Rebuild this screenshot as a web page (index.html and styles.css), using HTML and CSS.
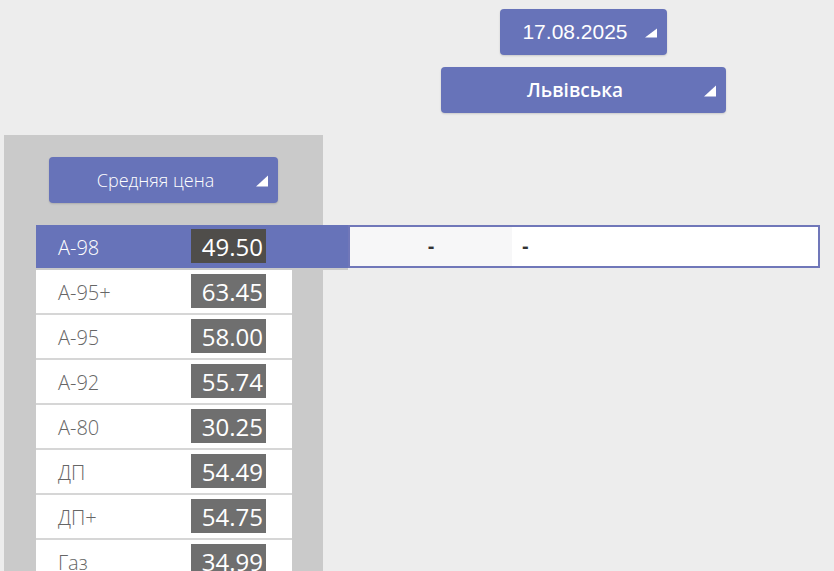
FILE: index.html
```html
<!DOCTYPE html>
<html lang="uk">
<head>
  <meta charset="UTF-8" />
  <title>Цены на топливо</title>
  <link rel="stylesheet" href="styles.css">
</head>
<body>
  <div class="filters">
    <div class="dropdown date-select">17.08.2025<span class="arrow"></span></div>
    <div class="dropdown region-select">Львівська<span class="arrow"></span></div>
  </div>

  <div class="main">
    <div class="side">
      <div class="dropdown mode-select">Средняя цена<span class="arrow"></span></div>

      <div class="fuel-list">
        <div class="fuel-row active">
          <div class="fuel-main">
            <span class="fuel-name">А-98</span>
            <span class="fuel-price">49.50</span>
          </div>
          <div class="fuel-detail">
            <div class="detail-cell first">-</div>
            <div class="detail-cell second">-</div>
          </div>
        </div>
        <div class="fuel-row">
          <div class="fuel-main">
            <span class="fuel-name">А-95+</span>
            <span class="fuel-price">63.45</span>
          </div>
        </div>
        <div class="fuel-row">
          <div class="fuel-main">
            <span class="fuel-name">А-95</span>
            <span class="fuel-price">58.00</span>
          </div>
        </div>
        <div class="fuel-row">
          <div class="fuel-main">
            <span class="fuel-name">А-92</span>
            <span class="fuel-price">55.74</span>
          </div>
        </div>
        <div class="fuel-row">
          <div class="fuel-main">
            <span class="fuel-name">А-80</span>
            <span class="fuel-price">30.25</span>
          </div>
        </div>
        <div class="fuel-row">
          <div class="fuel-main">
            <span class="fuel-name">ДП</span>
            <span class="fuel-price">54.49</span>
          </div>
        </div>
        <div class="fuel-row">
          <div class="fuel-main">
            <span class="fuel-name">ДП+</span>
            <span class="fuel-price">54.75</span>
          </div>
        </div>
        <div class="fuel-row">
          <div class="fuel-main">
            <span class="fuel-name">Газ</span>
            <span class="fuel-price">34.99</span>
          </div>
        </div>
      </div>
    </div>
  </div>
</body>
</html>
```

FILE: styles.css
```css
body {
  margin: 0;
  background: #ededed;
  font-family: 'Open Sans', sans-serif;
  overflow: hidden;
}

/* Top selectors */
.filters {
  display: flex;
  flex-direction: column;
  align-items: center;
  gap: 12px;
  padding: 9px 0 0 332px;
}

.dropdown {
  position: relative;
  box-sizing: border-box;
  height: 46px;
  display: flex;
  align-items: center;
  justify-content: center;
  padding-right: 16px;
  background: #6773b9;
  color: #ffffff;
  border-radius: 4px;
  box-shadow: 0 1px 2px rgba(0,0,0,0.15);
}

.arrow {
  position: absolute;
  right: 10px;
  top: 50%;
  transform: translateY(-40%);
  width: 0;
  height: 0;
  border-left: 12px solid transparent;
  border-bottom: 11px solid #ffffff;
}

.date-select {
  width: 167px;
  font-family: 'Liberation Sans', Arial, sans-serif;
  font-size: 21px;
}

.date-select .arrow {
  border-left-width: 12px;
  border-bottom-width: 9px;
}

.region-select {
  width: 285px;
  font-size: 19px;
  font-weight: 600;
}

/* Left panel */
.main {
  display: flex;
  margin-top: 22px;
}

.side {
  margin-left: 4px;
  width: 319px;
  height: calc(100vh - 135px);
  background: #cacaca;
  padding-top: 22px;
  box-sizing: border-box;
}

.mode-select {
  width: 229px;
  margin-left: 45px;
  font-size: 18px;
  font-weight: 300;
}

.fuel-list {
  margin: 22px 0 0 32px;
}

.fuel-row {
  display: flex;
  width: 256px;
}

.fuel-main {
  box-sizing: border-box;
  width: 256px;
  height: 45px;
  display: flex;
  align-items: center;
  padding: 0 26px 2px 22px;
  background: #ffffff;
  border-bottom: 2px solid #d6d6d6;
}

.fuel-name {
  flex: 1;
  padding-top: 4px;
  font-size: 20px;
  font-weight: 300;
  color: #666666;
}

.fuel-price {
  box-sizing: border-box;
  width: 75px;
  height: 34px;
  line-height: 36px;
  text-align: right;
  padding-right: 3px;
  background: #6f6f6f;
  color: #ffffff;
  font-size: 24px;
}

/* Selected row */
.fuel-row.active {
  width: 784px;
}

.fuel-row.active .fuel-main {
  width: 312px;
  padding-right: 82px;
  background: #6773b9;
  border-bottom-color: #cacaca;
}

.fuel-row.active .fuel-name {
  color: #ffffff;
}

.fuel-row.active .fuel-price {
  background: #4f4d4a;
}

.fuel-detail {
  box-sizing: border-box;
  width: 472px;
  height: 43px;
  display: flex;
  border: 2px solid #7077b9;
  background: #ffffff;
  font-family: 'Liberation Sans', Arial, sans-serif;
  font-size: 20px;
  font-weight: bold;
  color: #333333;
}

.detail-cell {
  display: flex;
  align-items: center;
}

.detail-cell.first {
  width: 162px;
  justify-content: center;
  background: #f7f7f8;
}

.detail-cell.second {
  flex: 1;
  padding-left: 10px;
}
```
